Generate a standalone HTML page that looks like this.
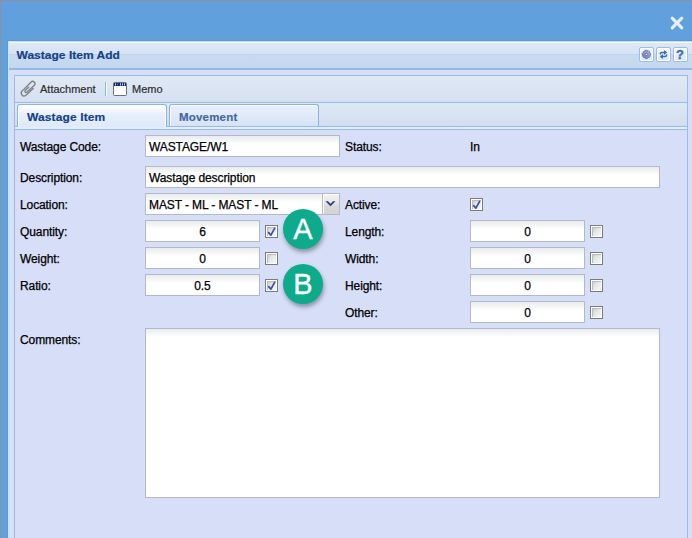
<!DOCTYPE html>
<html><head><meta charset="utf-8">
<style>
*{box-sizing:border-box;margin:0;padding:0}
html,body{width:692px;height:538px;overflow:hidden}
body{position:relative;background:#8c9299;font-family:"Liberation Sans",sans-serif;font-size:11.5px;color:#000}
.abs{position:absolute}
#frame{left:1px;top:1px;width:691px;height:537px;background:#60a1dd}
#win{left:7px;top:40px;width:685px;height:498px;background:#d7def7;border-left:1px solid #5b9ad8;border-top:1px solid #5b9ad8}
#winin{left:8px;top:41px;width:684px;height:497px;border-left:1px solid #d2e2f5;border-top:1px solid #c9def4}
#hdr{left:9px;top:42px;width:683px;height:26px;background:linear-gradient(#dce8f5 0,#d6e3f3 11px,#c3d5ee 11px,#c3d5ee 12px,#c8daf0 12px,#c5d8ef 100%);border-top:1px solid #f4f8fd}
#hdrline{left:9px;top:68px;width:683px;height:2px;background:#95b9e6}
#title{left:16.5px;top:48px;font-weight:bold;font-size:12px;letter-spacing:0.02px;color:#15428b;line-height:16px;transform:scaleY(0.92);transform-origin:0 0;-webkit-text-stroke:0.2px #15428b}
.tb{width:15px;height:15px;border:1px solid #9dbde8;border-radius:2px;background:linear-gradient(#f2f7fe,#dce8f8);box-shadow:inset 0 0 0 1px #fff}
#tbar{left:14px;top:75px;width:674px;height:28px;border:1px solid #99bbe8;background:linear-gradient(#e0e9f5,#d5e1f1)}
.lbl{position:absolute;font-size:12px;letter-spacing:-0.1px;line-height:14px;color:#000;-webkit-text-stroke:0.25px #000}
.fld{position:absolute;border:1px solid #b5b8c8;background:linear-gradient(#e9eced 0,#f6f7f7 5px,#fff 8px,#fff 100%);height:22px}
.fld span{position:absolute;top:4px;line-height:14px;white-space:nowrap;font-size:12px;letter-spacing:-0.1px;-webkit-text-stroke:0.25px #000}
.cb{position:absolute;width:13px;height:13px;border:1px solid #7b7b7b;background:#fff}
.cb i{position:absolute;left:1px;top:1px;width:9px;height:9px;background:linear-gradient(135deg,#c2c6ca 0,#e4e6e8 45%,#f8f8f8 100%);box-shadow:inset 1px 1px 0 #b9bdc3}
.cb svg{position:absolute;left:-1px;top:-1px}
.circ{position:absolute;width:40px;height:40px;border-radius:50%;background:#0bab8b;color:#fff;font-size:29px;line-height:41px;text-align:center;-webkit-text-stroke:0.35px #fff;box-shadow:1px 3px 4px rgba(50,50,70,.45)}
</style></head><body>
<div id="frame" class="abs"></div>
<svg class="abs" style="left:669px;top:15px" width="16" height="16" viewBox="0 0 16 16"><path d="M3.2 3.2L12.8 12.8M12.8 3.2L3.2 12.8" stroke="#e6eef8" stroke-width="3.1" stroke-linecap="round"/></svg>
<div id="win" class="abs"></div>
<div id="winin" class="abs"></div>
<div id="hdr" class="abs"></div>
<div id="hdrline" class="abs"></div>
<div id="title" class="abs">Wastage Item Add</div>
<div class="abs tb" style="left:639px;top:47px"></div>
<div class="abs tb" style="left:656px;top:47px"></div>
<div class="abs tb" style="left:673px;top:47px"></div>
<svg class="abs" style="left:639px;top:47px" width="15" height="15" viewBox="0 0 15 15"><defs><linearGradient id="gg" x1="1" y1="0" x2="0" y2="1"><stop offset="0" stop-color="#b4bcec"/><stop offset="1" stop-color="#6a72c0"/></linearGradient></defs><path d="M10.45 6.42 L11.59 6.42 L11.59 8.38 L10.45 8.38 L10.25 8.86 L11.05 9.67 L9.67 11.05 L8.86 10.25 L8.38 10.45 L8.38 11.59 L6.42 11.59 L6.42 10.45 L5.94 10.25 L5.13 11.05 L3.75 9.67 L4.55 8.86 L4.35 8.38 L3.21 8.38 L3.21 6.42 L4.35 6.42 L4.55 5.94 L3.75 5.13 L5.13 3.75 L5.94 4.55 L6.42 4.35 L6.42 3.21 L8.38 3.21 L8.38 4.35 L8.86 4.55 L9.67 3.75 L11.05 5.13 L10.25 5.94Z" fill="url(#gg)" stroke="#5b63ad" stroke-width="0.7" stroke-linejoin="round"/><circle cx="7.4" cy="7.4" r="1.2" fill="#eef1fb" stroke="#4d559f" stroke-width="0.8"/></svg>
<svg class="abs" style="left:656px;top:47px" width="15" height="15" viewBox="0 0 15 15"><g fill="none" stroke="#3d6ca8" stroke-width="1.5" stroke-linecap="round"><path d="M4.3 7 Q4.3 5.5 5.8 5.5 L9 5.5"/><path d="M10.6 7.9 Q10.6 9.4 9.1 9.4 L6 9.4"/></g><path d="M8 3 L11.2 5.5 L8 8Z M7 6.9 L3.8 9.4 L7 11.9Z" fill="#3d6ca8"/></svg>
<div class="abs" style="left:672.5px;top:47px;width:15px;height:15px;text-align:center;font-weight:bold;font-size:13px;line-height:15px;color:#4270ab;-webkit-text-stroke:0.45px #4270ab">?</div>

<div id="tbar" class="abs"></div>
<div class="abs" style="left:40px;top:82px;font-size:11px;color:#2e2e2e;line-height:14px;-webkit-text-stroke:0.2px #2e2e2e">Attachment</div>
<div class="abs" style="left:105px;top:82px;width:1px;height:14px;background:#8ab5ef"></div>
<div class="abs" style="left:106px;top:82px;width:1px;height:14px;background:#fff"></div>
<svg class="abs" style="left:18px;top:78px" width="22" height="22" viewBox="0 0 22 22"><g transform="translate(10.4,11) scale(0.88) translate(-10.2,-11)"><path d="M15.75 10.43 L7.16 18.4 A3.3 3.3 0 0 1 3.27 13.09 L13.09 3.27 A2.6 2.6 0 0 1 16.97 6.75 L8.38 14.72 A1.38 1.38 0 0 1 6.54 12.68 L10.43 9.0" fill="none" stroke="#7d7d7d" stroke-width="1.45" stroke-linecap="round"/></g></svg>
<div class="abs" style="left:113px;top:82px;width:14px;height:14px;border:1px solid #6f6f6f;border-radius:1.5px;background:linear-gradient(#0f2c7c 0,#0f2c7c 3px,#fff 3px)"></div>
<svg class="abs" style="left:114px;top:83px" width="12" height="3" viewBox="0 0 12 3"><g fill="#d8deef"><rect x="1.1" y="0.3" width="0.9" height="2.2"/><rect x="3.3" y="0.6" width="0.8" height="1.6" fill="#7d8cc0"/><rect x="6" y="0.3" width="0.9" height="2.2"/><rect x="8" y="0.3" width="0.9" height="2.2"/><rect x="10.1" y="0.3" width="0.9" height="2.2"/></g></svg>
<div class="abs" style="left:132px;top:82px;font-size:11px;color:#2e2e2e;line-height:14px;-webkit-text-stroke:0.2px #2e2e2e">Memo</div>

<!-- tabs -->
<div class="abs" style="left:14px;top:103px;width:674px;height:27px;border-left:1px solid #99bbe8;border-right:1px solid #99bbe8;background:linear-gradient(#dfe9f5,#cfdcee)"></div>
<div class="abs" style="left:14px;top:126px;width:674px;height:4px;border:1px solid #99bbe8;background:#e2eefb"></div>
<div class="abs" style="left:17px;top:104px;width:150px;height:23px;border:1px solid #8db2e3;border-bottom:none;border-radius:3px 3px 0 0;background:linear-gradient(#fff 0,#e6effb 10px,#deeafa 100%);box-shadow:inset 1px 1px 0 #fff,inset -1px 0 0 #fff"></div>
<div class="abs" style="left:27px;top:111px;font-weight:bold;font-size:12px;letter-spacing:0.12px;color:#15428b;line-height:14px;transform:scaleY(0.92);transform-origin:0 0;-webkit-text-stroke:0.2px #15428b">Wastage Item</div>
<div class="abs" style="left:169px;top:104px;width:150px;height:22px;border:1px solid #8db2e3;border-bottom:none;border-radius:3px 3px 0 0;background:linear-gradient(#eaf1fb,#d6e3f5);box-shadow:inset 1px 1px 0 #fff"></div>
<div class="abs" style="left:179px;top:111px;font-weight:bold;font-size:11.5px;letter-spacing:0.2px;color:#416aa3;line-height:14px;transform:scaleY(0.95);transform-origin:0 0;-webkit-text-stroke:0.2px #416aa3">Movement</div>

<!-- body border -->
<div class="abs" style="left:14px;top:130px;width:674px;height:408px;border-left:1px solid #99bbe8;border-right:1px solid #99bbe8"></div>

<!-- labels left -->
<div class="lbl" style="left:20px;top:140px">Wastage Code:</div>
<div class="lbl" style="left:20px;top:171px">Description:</div>
<div class="lbl" style="left:20px;top:198px">Location:</div>
<div class="lbl" style="left:20px;top:225px">Quantity:</div>
<div class="lbl" style="left:20px;top:252px">Weight:</div>
<div class="lbl" style="left:20px;top:279px">Ratio:</div>
<div class="lbl" style="left:20px;top:333px">Comments:</div>
<!-- labels right -->
<div class="lbl" style="left:345px;top:140px">Status:</div>
<div class="lbl" style="left:470px;top:140px">In</div>
<div class="lbl" style="left:345px;top:198px">Active:</div>
<div class="lbl" style="left:345px;top:225px">Length:</div>
<div class="lbl" style="left:345px;top:252px">Width:</div>
<div class="lbl" style="left:345px;top:279px">Height:</div>
<div class="lbl" style="left:345px;top:306px">Other:</div>

<!-- fields -->
<div class="fld" style="left:145px;top:135px;width:195px"><span style="left:3px">WASTAGE/W1</span></div>
<div class="fld" style="left:145px;top:166px;width:515px"><span style="left:3px">Wastage description</span></div>
<div class="fld" style="left:145px;top:193px;width:195px"><span style="left:3px">MAST - ML - MAST - ML</span></div>
<div class="abs" style="left:322px;top:193px;width:18px;height:22px;border:1px solid #b5b8c8;background:linear-gradient(#f2f2f2 0,#e8e8e8 40%,#d9d9d9 60%,#d3d3d3 100%);box-shadow:inset 1px 1px 0 #fff"></div>
<svg class="abs" style="left:324px;top:198px" width="14" height="10" viewBox="0 0 14 10"><path d="M1.5 3.2 L4 3.2 L6.5 5.7 L9 3.2 L11.5 3.2 L6.5 8.3Z" fill="#233f80"/></svg>

<div class="fld" style="left:145px;top:220px;width:115px"><span style="left:0;width:113px;text-align:center">6</span></div>
<div class="fld" style="left:145px;top:247px;width:115px"><span style="left:0;width:113px;text-align:center">0</span></div>
<div class="fld" style="left:145px;top:274px;width:115px"><span style="left:0;width:113px;text-align:center">0.5</span></div>
<div class="cb" style="left:265px;top:225px"><i></i><svg width="13" height="13" viewBox="0 0 13 13"><path d="M3.7 7.6 L5.9 10.1 L9.6 3.3" fill="none" stroke="#3853a3" stroke-width="1.75" stroke-linecap="round" stroke-linejoin="round"/></svg></div>
<div class="cb" style="left:265px;top:252px"><i></i></div>
<div class="cb" style="left:265px;top:279px"><i></i><svg width="13" height="13" viewBox="0 0 13 13"><path d="M3.7 7.6 L5.9 10.1 L9.6 3.3" fill="none" stroke="#3853a3" stroke-width="1.75" stroke-linecap="round" stroke-linejoin="round"/></svg></div>

<div class="cb" style="left:470px;top:198px"><i></i><svg width="13" height="13" viewBox="0 0 13 13"><path d="M3.7 7.6 L5.9 10.1 L9.6 3.3" fill="none" stroke="#3853a3" stroke-width="1.75" stroke-linecap="round" stroke-linejoin="round"/></svg></div>
<div class="fld" style="left:470px;top:220px;width:115px"><span style="left:0;width:113px;text-align:center">0</span></div>
<div class="fld" style="left:470px;top:247px;width:115px"><span style="left:0;width:113px;text-align:center">0</span></div>
<div class="fld" style="left:470px;top:274px;width:115px"><span style="left:0;width:113px;text-align:center">0</span></div>
<div class="fld" style="left:470px;top:301px;width:115px"><span style="left:0;width:113px;text-align:center">0</span></div>
<div class="cb" style="left:590px;top:225px"><i></i></div>
<div class="cb" style="left:590px;top:252px"><i></i></div>
<div class="cb" style="left:590px;top:279px"><i></i></div>
<div class="cb" style="left:590px;top:306px"><i></i></div>

<div class="fld" style="left:145px;top:328px;width:515px;height:170px"></div>

<div class="circ" style="left:283px;top:209px">A</div>
<div class="circ" style="left:283px;top:264px">B</div>
</body></html>
